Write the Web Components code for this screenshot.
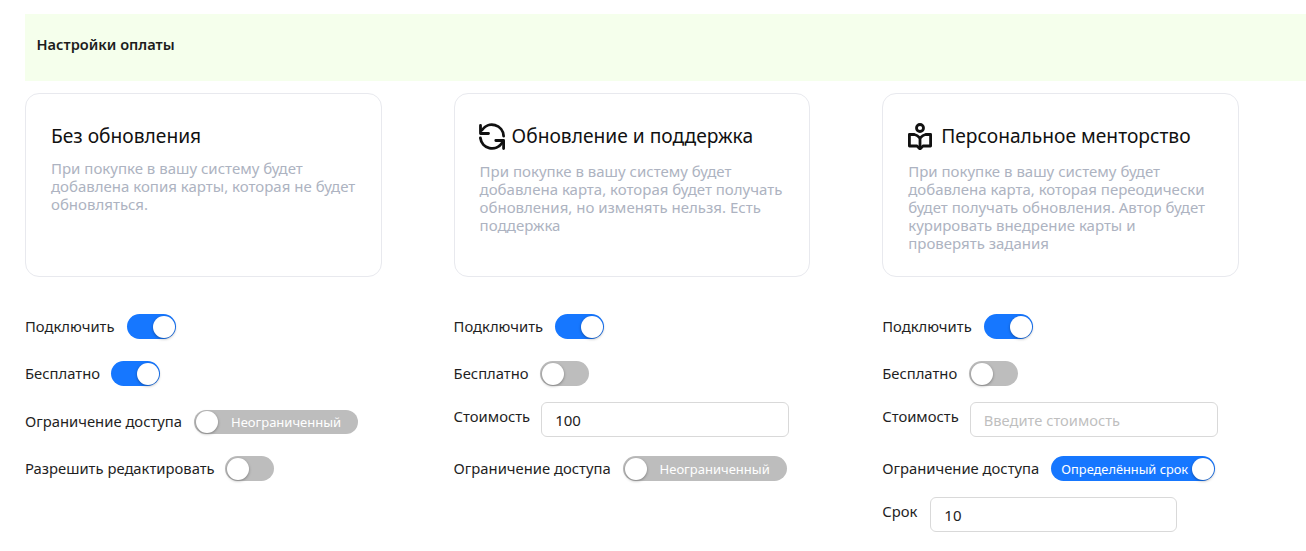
<!DOCTYPE html>
<html lang="ru">
<head>
<meta charset="utf-8">
<title>Настройки оплаты</title>
<style>
  html, body { margin: 0; background: #fff; overflow: hidden; }
  body { font-family: "Noto Sans", "Open Sans", sans-serif; color: #1a1a1a; }
</style>
</head>
<body>
<pay-settings>
  <pay-column>
    <plan-card slot="card" heading="Без обновления">При покупке в вашу систему будет добавлена копия карты, которая не будет обновляться.</plan-card>
    <field-row label="Подключить" style="gap:12px"><toggle-switch on></toggle-switch></field-row>
    <field-row label="Бесплатно"><toggle-switch on></toggle-switch></field-row>
    <field-row label="Ограничение доступа" style="margin-top:1px;gap:12px"><toggle-switch wide text="Неограниченный" style="height:24px"></toggle-switch></field-row>
    <field-row label="Разрешить редактировать" style="gap:10px"><toggle-switch></toggle-switch></field-row>
  </pay-column>
  <pay-column>
    <plan-card slot="card" heading="Обновление и поддержка" icon="sync">При покупке в вашу систему будет добавлена карта, которая будет получать обновления, но изменять нельзя. Есть поддержка</plan-card>
    <field-row label="Подключить" style="gap:12px"><toggle-switch on></toggle-switch></field-row>
    <field-row label="Бесплатно"><toggle-switch></toggle-switch></field-row>
    <field-row label="Стоимость" top><text-field value="100"></text-field></field-row>
    <field-row label="Ограничение доступа" style="gap:12px"><toggle-switch wide text="Неограниченный"></toggle-switch></field-row>
  </pay-column>
  <pay-column>
    <plan-card slot="card" heading="Персональное менторство" icon="mentor">При покупке в вашу систему будет добавлена карта, которая переодически будет получать обновления. Автор будет курировать внедрение карты и проверять задания</plan-card>
    <field-row label="Подключить" style="gap:12px"><toggle-switch on></toggle-switch></field-row>
    <field-row label="Бесплатно" style="gap:11.5px"><toggle-switch></toggle-switch></field-row>
    <field-row label="Стоимость" top><text-field placeholder="Введите стоимость"></text-field></field-row>
    <field-row label="Ограничение доступа" style="gap:12px"><toggle-switch on wide text="Определённый срок"></toggle-switch></field-row>
    <field-row label="Срок" top style="gap:13px"><text-field value="10" style="width:247px"></text-field></field-row>
  </pay-column>
</pay-settings>

<script>
const ICONS = {
  sync: `<svg style="margin-left:-1px;margin-right:7px" width="26" height="27" viewBox="0 0 26 27" fill="none" stroke="#111" stroke-width="2.8" stroke-linecap="round" stroke-linejoin="round">
    <path d="M24.600 13A11.800 11.800 0 0 0 3 7"/><path d="M1.500 2.500V10.500H9.500"/>
    <path d="M1.400 15A11.800 11.800 0 0 0 23 20"/><path d="M24.600 25.500V17.500H16.800"/></svg>`,
  mentor: `<svg style="margin-right:9px" width="24" height="27" viewBox="0 0 24 27" fill="none" stroke="#111" stroke-width="2.800" stroke-linejoin="round">
    <circle cx="12" cy="5" r="3.500"/>
    <path d="M12 15C10 13 9 12 6.500 11.500H1.400V23H9L12 26L15 23H22.600V11.500H17.500C15 12 14 13 12 15Z"/>
    <path d="M12 15V25"/></svg>`
};

class PaySettings extends HTMLElement {
  constructor() {
    super();
    this.attachShadow({ mode: "open" });
    this.shadowRoot.innerHTML = `
    <style>
      :host { display: block; padding: 14px 0 0 25px; }
      .head {
        display: flex; align-items: center;
        height: 67px; padding: 0 12px 7px 11.500px; box-sizing: border-box;
        background: #f5ffec;
        font-size: 14.600px; font-weight: 600; color: #1c1c1c;
      }
      .cols { display: flex; padding-top: 12px; }
    </style>
    <div class="head">Настройки оплаты</div>
    <div class="cols"><slot></slot></div>`;
  }
}

class PayColumn extends HTMLElement {
  constructor() {
    super();
    this.attachShadow({ mode: "open" });
    this.shadowRoot.innerHTML = `
    <style>
      :host { display: block; width: 356.6px; margin-right: 72px; flex: none; }
      .rows { display: flex; flex-direction: column; padding-top: 37px; }
    </style>
    <slot name="card"></slot>
    <div class="rows"><slot></slot></div>`;
  }
}

class PlanCard extends HTMLElement {
  constructor() {
    super();
    this.attachShadow({ mode: "open" });
  }
  connectedCallback() {
    let icon = this.getAttribute("icon");
    this.shadowRoot.innerHTML = `
    <style>
      :host {
        display: block; height: 184px; box-sizing: border-box;
        border: 1px solid #e8e9ee; border-radius: 14px;
        padding: 25px 25px 0;
      }
      h3 {
        display: flex; align-items: center; margin: 0;
        min-height: 34px;
        font-size: 19.200px; font-weight: 400; color: #111;
      }
      h3 svg { flex: none; }
      h3 span { padding-bottom: 1px; }
      p {
        margin: ${icon ? "9px" : "6px"} 0 0;
        font-size: 15px; line-height: 18px; color: #adb3c1;
      }
    </style>
    <h3>${icon ? ICONS[icon] : ""}<span>${this.getAttribute("heading")}</span></h3>
    <p><slot></slot></p>`;
  }
}

class FieldRow extends HTMLElement {
  constructor() {
    super();
    this.attachShadow({ mode: "open" });
  }
  connectedCallback() {
    let top = this.hasAttribute("top");
    this.shadowRoot.innerHTML = `
    <style>
      :host {
        display: flex; align-items: ${top ? "flex-start" : "center"}; gap: 11px;
        min-height: 25px; margin: ${top ? "-6px 0 19px" : "0 0 22px"};
        font-size: 14.800px; line-height: 20px; color: #1f1f1f;
      }
      span { white-space: nowrap; ${top ? "padding-top: 4px;" : "padding-bottom: 2px;"} }
    </style>
    <span>${this.getAttribute("label")}</span><slot></slot>`;
  }
}

class ToggleSwitch extends HTMLElement {
  constructor() {
    super();
    this.attachShadow({ mode: "open" });
  }
  connectedCallback() {
    let text = this.getAttribute("text") || "";
    this.shadowRoot.innerHTML = `
    <style>
      :host {
        display: flex; align-items: center; flex: none; box-sizing: border-box;
        height: 25px; min-width: 49px; border-radius: 13px; padding: 1.500px 2px;
        background: #bdbdbd; color: #fff; font-size: 13px;
      }
      :host([on]) { background: #1677ff; flex-direction: row-reverse; padding-right: 1px; }
      :host([wide]) { width: 164px; }
      .knob {
        flex: none; width: 22px; height: 22px; border-radius: 50%; background: #fff;
        box-shadow: 0 1px 3px rgba(0,0,0,.35);
      }
      .txt { flex: 1; text-align: center; white-space: nowrap; padding-right: 2px; }
      :host([on]) .txt { padding: 0 0 0 4px; font-size: 12.800px; }
    </style>
    <div class="knob"></div>${text ? `<div class="txt">${text}</div>` : ""}`;
  }
}

class TextField extends HTMLElement {
  constructor() {
    super();
    this.attachShadow({ mode: "open" });
  }
  connectedCallback() {
    let ph = this.getAttribute("placeholder");
    this.shadowRoot.innerHTML = `
    <style>
      :host {
        display: flex; align-items: center; flex: none; box-sizing: border-box;
        width: 248px; height: 35px; padding: 0 13px;
        border: 1px solid #d9d9d9; border-radius: 6px;
        font-size: 15px; color: #222;
      }
      .ph { color: #bfbfbf; font-size: 14.700px; }
    </style>
    ${ph ? `<span class="ph">${ph}</span>` : `<span>${this.getAttribute("value")}</span>`}`;
  }
}

customElements.define("pay-settings", PaySettings);
customElements.define("pay-column", PayColumn);
customElements.define("plan-card", PlanCard);
customElements.define("field-row", FieldRow);
customElements.define("toggle-switch", ToggleSwitch);
customElements.define("text-field", TextField);
</script>
</body>
</html>
